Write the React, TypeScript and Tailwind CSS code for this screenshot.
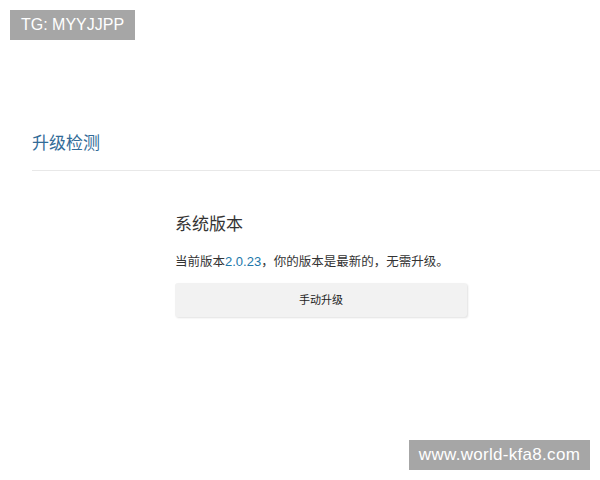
export default function App() {
  return (
    <div
      className="relative w-[600px] h-[480px] bg-white overflow-hidden"
      style={{ fontFamily: '"Liberation Sans", "Noto Sans CJK SC", sans-serif' }}
    >
      <div className="absolute left-[10px] top-[10px] h-[30px] w-[125px] bg-[#a6a6a6] text-white text-[16px] flex items-center justify-center">
        TG: MYYJJPP
      </div>

      <div className="pt-[131px] pl-[32px]">
        <h2 className="text-[17px] leading-[26px] text-[#336c98]">升级检测</h2>
        <div className="mt-[13px] h-px bg-[#e8e8e8]" />

        <div className="pl-[143px] pt-[41px]">
          <h3 className="text-[17px] leading-[26px] text-[#333]">系统版本</h3>
          <p className="mt-[14px] text-[12.5px] leading-[20px] text-[#333]">
            当前版本<span className="text-[#2277aa] text-[13px]">2.0.23</span>，你的版本是最新的，无需升级。
          </p>
          <button className="mt-[11px] w-[292px] h-[34px] rounded-[3px] bg-[#f2f2f2] text-[11px] text-[#222] shadow-[1px_1px_2px_rgba(0,0,0,0.12)]">
            手动升级
          </button>
        </div>
      </div>

      <div className="absolute left-[409px] top-[440px] h-[30px] w-[181px] bg-[#a6a6a6] text-white text-[17px] tracking-[0.3px] flex items-center justify-center">
        www.world-kfa8.com
      </div>
    </div>
  );
}
